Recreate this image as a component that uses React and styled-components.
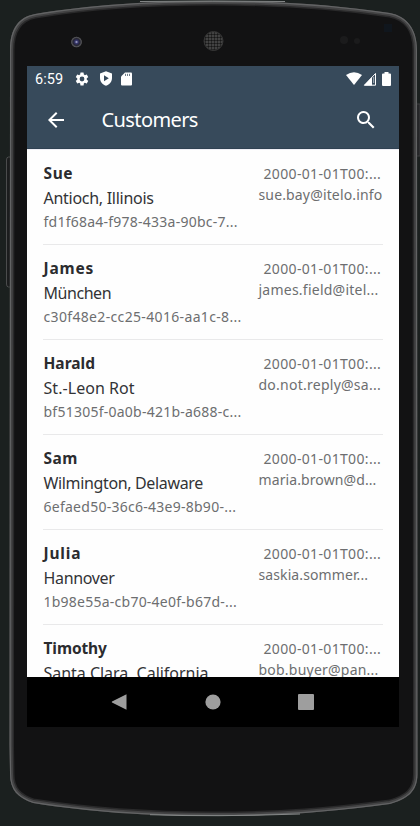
import React from "react";
import styled, { createGlobalStyle } from "styled-components";

const GlobalStyle = createGlobalStyle`
  * { box-sizing: border-box; }
  body { margin: 0; background: #1b201f; overflow: hidden; }
`;

const Stage = styled.main`
  display: grid;
  width: 420px;
  height: 826px;
  background: #1b201f;
  font-family: "Noto Sans", "Open Sans", sans-serif;
  & > * { grid-area: 1 / 1; }
`;

const Screen = styled.section`
  z-index: 1;
  display: grid;
  grid-template-rows: 83px 528px 50px;
  width: 372px;
  height: 661px;
  margin: 66px 0 0 27px;
  background: #fefefe;
`;

const Header = styled.header`
  display: grid;
  grid-template-rows: 25px 58px;
  background: #374a5b;
  border-bottom: 1px solid #2f4152;
  color: #fff;
`;

const StatusBar = styled.div`
  display: flex;
  align-items: center;
  padding: 0 8px 0 8px;
`;

const Clock = styled.time`
  width: 39px;
  padding-top: 1px;
  font: 400 14.5px/25px Roboto, sans-serif;
  letter-spacing: 0.05px;
`;

const StatusIcons = styled.div`
  display: flex;
  align-items: center;
  gap: ${(p) => p.$gap}px;
  margin-left: ${(p) => (p.$end ? "auto" : "0")};
`;

const Glyph = styled.svg`
  display: block;
  flex: none;
  width: ${(p) => p.$w}px;
  height: ${(p) => p.$h || p.$w}px;
`;

const BatterySlot = styled.div`
  padding-left: 6px;
`;

const AppBar = styled.div`
  display: grid;
  grid-template-columns: 74.5px 1fr 57px;
  align-items: center;
`;

const IconButton = styled.button`
  display: flex;
  padding: 0 0 0 ${(p) => p.$inset}px;
  border: 0;
  background: none;
  color: inherit;
`;

const Title = styled.h1`
  margin: 0;
  font-size: 20px;
  font-weight: 400;
  line-height: 28px;
  letter-spacing: -0.6px;
`;

const List = styled.ul`
  margin: 0;
  padding: 0 16px;
  list-style: none;
  overflow: hidden;
  border-top: 1px solid #eeeef4;
`;

const Row = styled.li`
  display: grid;
  grid-template-columns: 1fr 124.5px;
  height: 95px;
  padding-top: 11px;
  border-bottom: 1px solid #e9e9ea;
  white-space: nowrap;
`;

const Details = styled.div`
  display: flex;
  flex-direction: column;
  padding-left: 0.5px;
`;

const Name = styled.strong`
  font-size: 15.5px;
  font-weight: 700;
  line-height: 25px;
  color: #2b2c2f;
  letter-spacing: ${(p) => p.$track}px;
`;

const City = styled.span`
  font-size: 16px;
  line-height: 25px;
  color: #323336;
  letter-spacing: ${(p) => p.$track}px;
`;

const Identifier = styled.span`
  font-size: 14px;
  line-height: 21px;
  color: #6d6e70;
  letter-spacing: ${(p) => p.$track}px;
`;

const Contact = styled.div`
  display: flex;
  flex-direction: column;
  padding-top: 2px;
  font-size: 14px;
  line-height: 21px;
  color: #6d6e70;
`;

const Timestamp = styled.span`
  padding-left: 5px;
  letter-spacing: 0.34px;
`;

const Email = styled.span`
  letter-spacing: ${(p) => p.$track}px;
`;

const NavBar = styled.nav`
  display: flex;
  justify-content: center;
  align-items: center;
  gap: 76px;
  background: #000;
`;

/* track: letter spacing of the name, city, id and mail */
const customers = [
  { name: "Sue", city: "Antioch, Illinois", id: "fd1f68a4-f978-433a-90bc-7...", mail: "sue.bay@itelo.info", track: [0.6, -0.28, 0.24, 0.15] },
  { name: "James", city: "München", id: "c30f48e2-cc25-4016-aa1c-8...", mail: "james.field@itel...", track: [0.8, -0.45, 0.34, 0.24] },
  { name: "Harald", city: "St.-Leon Rot", id: "bf51305f-0a0b-421b-a688-c...", mail: "do.not.reply@sa...", track: [0, 0.05, 0.24, 0.25] },
  { name: "Sam", city: "Wilmington, Delaware", id: "6efaed50-36c6-43e9-8b90-...", mail: "maria.brown@d...", track: [0.4, -0.35, 0.26, 0.1] },
  { name: "Julia", city: "Hannover", id: "1b98e55a-cb70-4e0f-b67d-...", mail: "saskia.sommer...", track: [0.8, -0.35, 0.24, 0.1] },
  { name: "Timothy", city: "Santa Clara, California", id: "", mail: "bob.buyer@pan...", track: [-0.1, -0.03, 0, 0.22] },
];

const BODY =
  "M10 50C10 28 19 17 35 14C90 5 145 1 213 1C281 1 335 5 390 13C406 16 417 28 417 50L417.500 774C417.500 792 407 799 390 804C330 812 281 816 213 816C145 816 90 812 33 803C18 798 10 790 10 774L9.500 745Z";

function PhoneBody() {
  return (
    <Glyph $w={420} $h={826} viewBox="0 0 420 826" fill="none">
      <defs>
        <pattern id="mesh" width="3" height="3" patternUnits="userSpaceOnUse">
          <rect width="3" height="3" fill="#505050" />
          <circle cx="1.5" cy="1.5" r="1.2" fill="#161616" />
        </pattern>
        <radialGradient id="lens">
          <stop offset="0" stopColor="#b9bbd8" />
          <stop offset="0.3" stopColor="#34346b" />
          <stop offset="0.65" stopColor="#242430" />
          <stop offset="1" stopColor="#68686b" />
        </radialGradient>
        <clipPath id="body">
          <path d={BODY} />
        </clipPath>
      </defs>
      <path d="M11 157H8.500Q6.500 157 6.500 160V284Q6.500 287 8.500 287H11Z" fill="#1c1d1e" stroke="#4b4c4d" />
      <path d="M416 104H420V156H416Z" fill="#252628" stroke="#3c3d3f" />
      <g clipPath="url(#body)">
        <path d={BODY} fill="#121213" stroke="#29292a" strokeWidth="9" />
        <path d={BODY} stroke="#434344" strokeWidth="6" />
        <path d={BODY} stroke="#626364" strokeWidth="2.4" />
      </g>
      <path d="M140 1.500Q213 .5 285 1.500" stroke="#858888" />
      <path d="M150 814.700Q213 817 300 814" stroke="#858888" />
      <circle cx="76.500" cy="42" r="5.300" fill="url(#lens)" />
      <circle cx="213.500" cy="41" r="9.500" fill="url(#mesh)" stroke="#363636" />
      <circle cx="344" cy="40" r="4" fill="#1b1b1c" />
      <circle cx="357" cy="41" r="3" fill="#1b1b1c" />
      <rect x="384" y="24" width="8" height="8" fill="#10161d" />
    </Glyph>
  );
}

const GearIcon = () => (
  <Glyph $w={16} viewBox="0 0 24 24" fill="currentColor">
    <path d="M19.140 12.940c.04-.3.06-.61.06-.94 0-.32-.02-.64-.07-.94l2.030-1.580a.49.49 0 0 0 .12-.61l-1.920-3.320a.49.49 0 0 0-.59-.22l-2.390.96a7 7 0 0 0-1.620-.94l-.36-2.540a.48.48 0 0 0-.48-.41h-3.840a.48.48 0 0 0-.47.41l-.36 2.540a7 7 0 0 0-1.620.94l-2.390-.96a.49.49 0 0 0-.59.22L2.740 8.870a.48.48 0 0 0 .12.61l2.030 1.580a6 6 0 0 0 0 1.880l-2.030 1.580a.49.49 0 0 0-.12.61l1.920 3.320c.12.22.37.29.59.22l2.390-.96c.5.38 1.030.7 1.620.94l.36 2.540c.05.24.24.41.48.41h3.840c.24 0 .44-.17.47-.41l.36-2.540a7 7 0 0 0 1.620-.94l2.390.96c.22.08.47 0 .59-.22l1.920-3.320a.49.49 0 0 0-.12-.61ZM12 15.600a3.600 3.600 0 1 1 0-7.200 3.600 3.600 0 0 1 0 7.200Z" />
  </Glyph>
);

const ShieldIcon = () => (
  <Glyph $w={12} $h={15} viewBox="0 0 12 15" fill="currentColor">
    <path fillRule="evenodd" d="M6 .3 12 2.500V7C12 10.700 9.700 13.500 6 14.700 2.300 13.500 0 10.700 0 7V2.500ZM4 4.300V10.300L8.800 7.300Z" />
  </Glyph>
);

const CardIcon = () => (
  <Glyph $w={11} $h={14} viewBox="0 0 11 14" fill="currentColor">
    <path d="M4 .5H10Q11 .5 11 1.500V12.500Q11 13.500 10 13.500H1Q0 13.500 0 12.500V4.500Z" />
    <path d="M4.500 1.800V4M6.500 1.800V4M8.500 1.800V4" stroke="#71808c" />
  </Glyph>
);

const WifiIcon = () => (
  <Glyph $w={16} $h={13} viewBox="0 0 16 13" fill="currentColor">
    <path d="M0 3Q8-2.500 16 3L8 13Z" />
  </Glyph>
);

const SignalIcon = () => (
  <Glyph $w={13} $h={14} viewBox="0 0 13 14">
    <path d="M12.500 1.500V13.200H1.500Z" fill="none" stroke="currentColor" />
    <path d="M9 5V13.500H.8Z" fill="currentColor" />
    <path d="M10.700 5V11" stroke="currentColor" strokeWidth=".6" />
  </Glyph>
);

const BatteryIcon = () => (
  <Glyph $w={9} $h={14} viewBox="0 0 9 14" fill="currentColor">
    <path d="M2.500 0H6.500V1.500H8Q9 1.500 9 2.500V13Q9 14 8 14H1Q0 14 0 13V2.500Q0 1.500 1 1.500H2.500Z" />
  </Glyph>
);

export default function App() {
  return (
    <Stage>
      <GlobalStyle />
      <PhoneBody />
      <Screen>
        <Header>
          <StatusBar>
            <Clock>6:59</Clock>
            <StatusIcons $gap={9.5}>
              <GearIcon />
              <ShieldIcon />
              <CardIcon />
            </StatusIcons>
            <StatusIcons $gap={0.5} $end>
              <WifiIcon />
              <SignalIcon />
              <BatterySlot>
                <BatteryIcon />
              </BatterySlot>
            </StatusIcons>
          </StatusBar>
          <AppBar>
            <IconButton $inset={17} aria-label="Back">
              <Glyph $w={24} viewBox="0 0 24 24" fill="currentColor">
                <path d="M20 11H7.830l5.590-5.590L12 4l-8 8 8 8 1.410-1.410L7.830 13H20Z" />
              </Glyph>
            </IconButton>
            <Title>Customers</Title>
            <IconButton $inset={12} aria-label="Search">
              <Glyph $w={24} viewBox="0 0 24 24" fill="currentColor">
                <path d="M15.500 14h-.79l-.28-.27a6.500 6.500 0 1 0-.7.7l.27.28v.79l5 4.990L20.490 19ZM9.500 14a4.500 4.500 0 1 1 0-9 4.500 4.500 0 0 1 0 9Z" />
              </Glyph>
            </IconButton>
          </AppBar>
        </Header>
        <List>
          {customers.map((c) => (
            <Row key={c.name}>
              <Details>
                <Name $track={c.track[0]}>{c.name}</Name>
                <City $track={c.track[1]}>{c.city}</City>
                <Identifier $track={c.track[2]}>{c.id}</Identifier>
              </Details>
              <Contact>
                <Timestamp>2000-01-01T00:...</Timestamp>
                <Email $track={c.track[3]}>{c.mail}</Email>
              </Contact>
            </Row>
          ))}
        </List>
        <NavBar>
          <Glyph $w={18} viewBox="0 0 18 18" fill="#9e9e9e">
            <path d="M15.500 1.300V16.700L1 9.500Q.5 9 1 8.500Z" />
          </Glyph>
          <Glyph $w={16} viewBox="0 0 16 16" fill="#9e9e9e">
            <circle cx="8" cy="8" r="7.600" />
          </Glyph>
          <Glyph $w={18} viewBox="0 0 18 18" fill="#9e9e9e">
            <rect x="1" y="1" width="16" height="16" rx="1" />
          </Glyph>
        </NavBar>
      </Screen>
    </Stage>
  );
}
